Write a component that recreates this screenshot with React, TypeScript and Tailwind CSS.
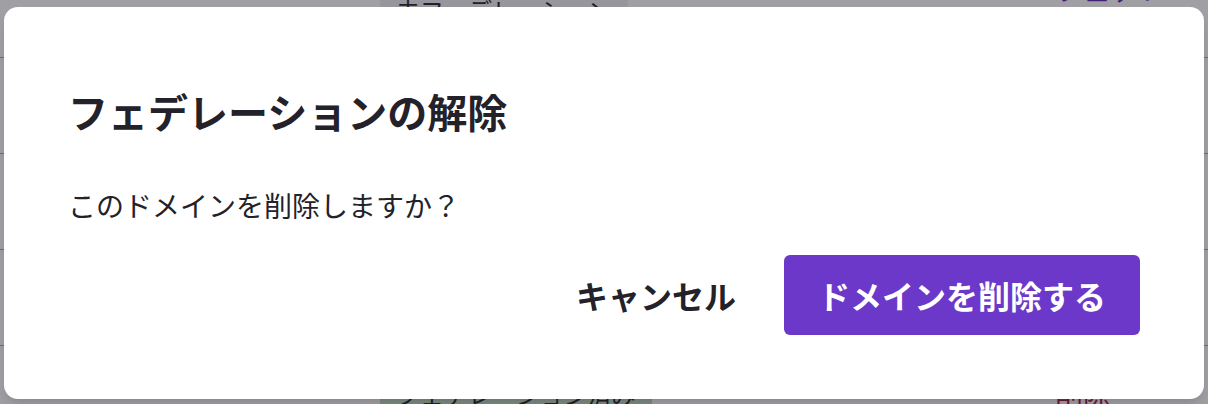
import React from 'react'

const jp = { fontFamily: '"Noto Sans CJK JP", "Noto Sans", sans-serif' }

interface Row {
    tag: string
    tagClass: string
    action: string
    actionClass: string
}

const rows: Row[] = [
    { tag: '未フェデレーション', tagClass: 'bg-[#efeff1]', action: 'フェデレーション', actionClass: 'text-[#5b21b6]' },
    { tag: '未フェデレーション', tagClass: 'bg-[#efeff1]', action: 'フェデレーション', actionClass: 'text-[#5b21b6]' },
    { tag: '未フェデレーション', tagClass: 'bg-[#efeff1]', action: 'フェデレーション', actionClass: 'text-[#5b21b6]' },
    { tag: '未フェデレーション', tagClass: 'bg-[#efeff1]', action: 'フェデレーション', actionClass: 'text-[#5b21b6]' },
    { tag: 'フェデレーション済み', tagClass: 'bg-[#c2dcc0]', action: '削除', actionClass: 'text-[#a3123a]' },
]

const App = () => {
    return (
        <div className="relative h-[404px] w-[1208px] overflow-hidden bg-white text-[#23222a]" style={jp}>
            {/* table behind the dialog */}
            <div className="-mt-[38px] flex flex-col">
                {rows.map((row, i) => (
                    <div key={i} className="flex h-[96px] items-center border-b border-[#a8a8ab]">
                        <div className="w-[380px]" />
                        <span className={`rounded-md px-4 text-[24px] leading-[40px] ${row.tagClass}`}>{row.tag}</span>
                        <div className="flex-1" />
                        <span className={`w-[153px] text-[28px] ${row.actionClass}`}>{row.action}</span>
                    </div>
                ))}
            </div>

            {/* overlay */}
            <div className="absolute inset-0 flex items-start justify-center bg-[rgba(35,33,45,0.43)] pt-[7px]">
                <div className="w-[1200px] rounded-[14px] bg-white px-16 pb-16 pt-[80px] shadow-lg">
                    <h2 className="text-[40px] font-bold leading-[48px] text-[#23222a]">フェデレーションの解除</h2>
                    <p className="mt-[50px] text-[28px] leading-[40px] text-[#23222a]">このドメインを削除しますか？</p>
                    <div className="mt-[30px] flex items-center justify-end gap-[48px]">
                        <button className="text-[32px] font-bold text-[#23222a]">キャンセル</button>
                        <button className="h-[80px] w-[356px] rounded-md bg-[#6b38ca] text-[32px] font-bold text-white">
                            ドメインを削除する
                        </button>
                    </div>
                </div>
            </div>
        </div>
    )
}

export default App
